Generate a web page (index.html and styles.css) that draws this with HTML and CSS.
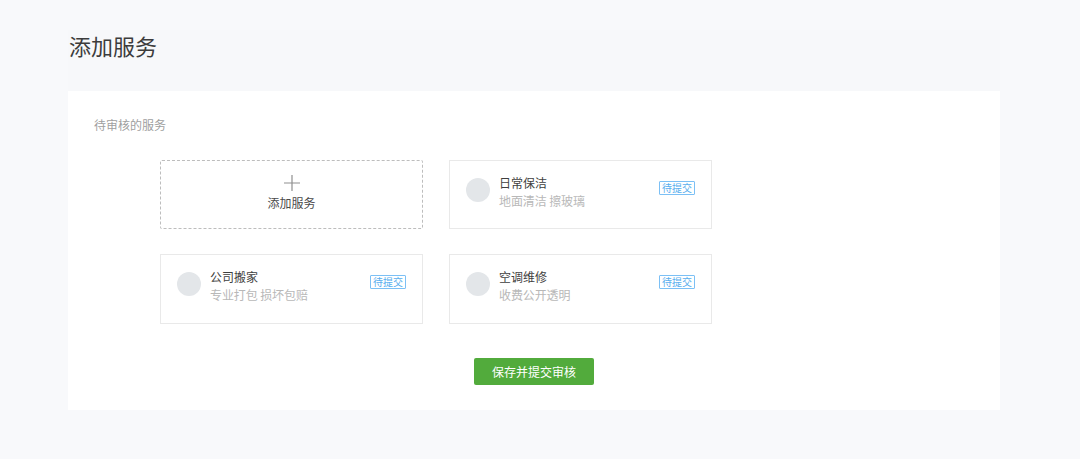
FILE: index.html
```html
<!DOCTYPE html>
<html lang="zh-CN">
<head>
<meta charset="utf-8">
<title>添加服务</title>
<link rel="stylesheet" href="styles.css">
</head>
<body>
<main class="page">
  <header class="head"><h1 class="title">添加服务</h1></header>
  <section class="panel">
    <h2 class="label">待审核的服务</h2>
    <div class="grid">
      <button class="card add" type="button">
        <svg class="plus" width="16" height="16" viewBox="0 0 16 16" aria-hidden="true"><path d="M8 0V16M0 8H16" stroke="#8f8f8f" stroke-width="1.2" fill="none"/></svg>
        <span class="add-text">添加服务</span>
      </button>
      <div class="card item">
        <span class="avatar"></span>
        <div class="info"><div class="name">日常保洁</div><div class="desc">地面清洁 擦玻璃</div></div>
        <span class="tag">待提交</span>
      </div>
      <div class="card item">
        <span class="avatar"></span>
        <div class="info"><div class="name">公司搬家</div><div class="desc">专业打包 损坏包赔</div></div>
        <span class="tag">待提交</span>
      </div>
      <div class="card item">
        <span class="avatar"></span>
        <div class="info"><div class="name">空调维修</div><div class="desc">收费公开透明</div></div>
        <span class="tag">待提交</span>
      </div>
    </div>
    <div class="actions"><button class="save" type="button">保存并提交审核</button></div>
  </section>
</main>
</body>
</html>
```
FILE: styles.css
```css
* { box-sizing: border-box; }
html, body { margin: 0; height: 100%; }
body {
  background: #f8f9fb;
  font-family: "Noto Sans CJK SC", "Liberation Sans", sans-serif;
  overflow: hidden;
}
.page { width: 932px; margin-left: 68px; padding-top: 30px; }
.head { height: 61px; background: #f7f8fa; padding-left: 1px; }
.title { margin: 0; font-size: 22px; line-height: 30px; font-weight: 400; color: #3c3c3c; }
.panel { height: 319px; background: #fff; padding: 25px 0 0 26px; display: flex; flex-direction: column; }
.label { margin: 0; font-size: 12px; line-height: 17px; font-weight: 400; color: #a0a0a0; }
.grid { margin: 27px 0 0 66px; display: grid; grid-template-columns: 263px 263px; grid-template-rows: 69px 70px; column-gap: 26px; row-gap: 25px; }
.card { background: #fff; border: 1px solid #e9e9e9; font-family: inherit; }
.add { border: 1px dashed #bdbdbd; border-radius: 2px; padding: 14px 0 0; display: flex; flex-direction: column; align-items: center; justify-content: flex-start; }
.plus { display: block; }
.add-text { margin-top: 3px; font-size: 12px; line-height: 17px; color: #4a4a4a; }
.item { display: flex; align-items: flex-start; padding: 17px 16px 0 16px; }
.avatar { width: 24px; height: 24px; border-radius: 50%; background: #e3e6e9; flex: none; }
.info { margin-left: 9px; flex: 1; margin-top: -4px; }
.name { font-size: 12px; line-height: 17px; color: #3f3f3f; }
.desc { margin-top: 1px; font-size: 12px; line-height: 17px; letter-spacing: -0.1px; color: #b8b8b8; }
.tag { flex: none; margin-top: 3px; width: 36px; height: 14px; border: 1px solid #7cc0f5; border-radius: 1px; font-size: 10px; line-height: 12px; text-align: center; color: #58aeee; white-space: nowrap; }
.actions { margin-top: 34px; padding-left: 380px; }
.save { display: block; width: 120px; height: 27px; padding: 0; border: 0; border-radius: 2px; background: #52ab3c; color: #fff; font-family: inherit; font-size: 12px; line-height: 27px; }
```
